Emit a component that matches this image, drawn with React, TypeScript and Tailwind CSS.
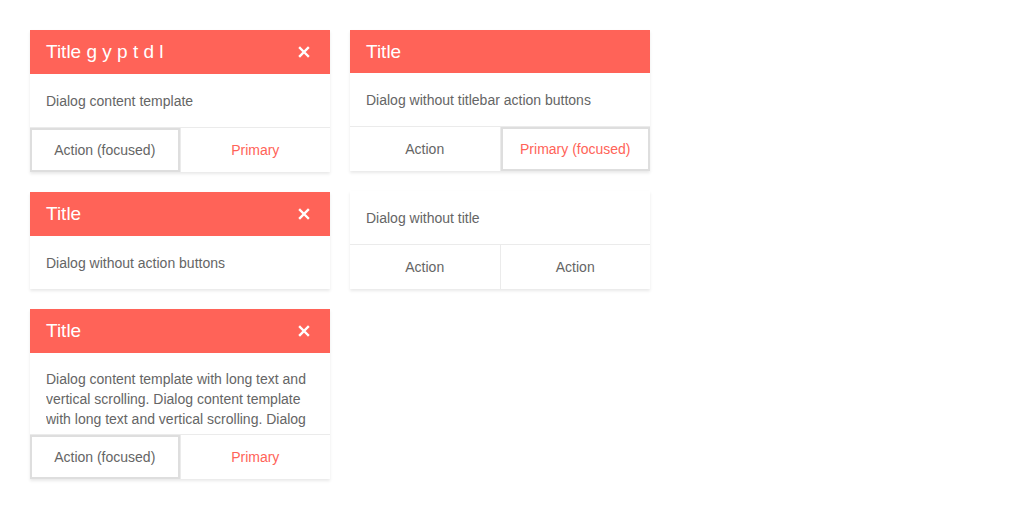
import React from "react";

const CloseIcon = () => (
  <svg width="12" height="12" viewBox="0 0 12 12" className="block">
    <path d="M2 2 L10 10 M10 2 L2 10" stroke="white" strokeWidth="2.4" strokeLinecap="square" />
  </svg>
);

type Btn = { label: string; primary?: boolean; focused?: boolean };

const Dialog = ({
  title,
  close = true,
  children,
  actions,
  contentClass = "pt-[17px] pb-4",
}: {
  title?: string;
  close?: boolean;
  children: React.ReactNode;
  actions?: Btn[];
  contentClass?: string;
}) => {
  return (
    <div className="w-[300px] bg-white flex flex-col shadow-[0_2px_3px_rgba(0,0,0,0.09)]">
      {title && (
        <div
          className={`flex items-center justify-between bg-[#ff6358] text-white px-4 ${
            close ? "h-[44px]" : "h-[43px]"
          }`}
        >
          <span className="text-[19px] leading-5">{title}</span>
          {close && (
            <span className="w-[16px] h-[16px] flex items-center justify-center mr-[2px]">
              <CloseIcon />
            </span>
          )}
        </div>
      )}
      <div className={`px-4 text-[14px] leading-5 text-[#656565] ${contentClass}`}>
        {children}
      </div>
      {actions && (
        <div className="flex border-t border-[#ebebeb]">
          {actions.map((a, i) => (
            <div
              key={i}
              className={`flex-1 h-[44px] flex items-center justify-center text-[14px] ${
                a.primary ? "text-[#ff6358]" : "text-[#656565]"
              } ${i > 0 ? "border-l border-[#ebebeb]" : ""} ${
                a.focused ? "shadow-[inset_0_0_0_2px_#dedede]" : ""
              }`}
            >
              {a.label}
            </div>
          ))}
        </div>
      )}
    </div>
  );
};

export default function App() {
  return (
    <div
      className="w-[1024px] h-[509px] bg-white flex gap-5 p-[30px]"
      style={{ fontFamily: "'Liberation Sans', Arial, sans-serif" }}
    >
      <div className="flex flex-col gap-5">
        <Dialog
          title="Title g y p t d l"
          actions={[{ label: "Action (focused)", focused: true }, { label: "Primary", primary: true }]}
        >
          Dialog content template
        </Dialog>
        <Dialog title="Title">Dialog without action buttons</Dialog>
        <Dialog
          title="Title"
          contentClass="pt-4 pb-[5px]"
          actions={[{ label: "Action (focused)", focused: true }, { label: "Primary", primary: true }]}
        >
          <div className="h-[60px] overflow-y-auto [scrollbar-width:none]">
            Dialog content template with long text and vertical scrolling. Dialog content template
            with long text and vertical scrolling. Dialog content template with long text and
            vertical scrolling.
          </div>
        </Dialog>
      </div>
      <div className="flex flex-col gap-5">
        <Dialog
          title="Title"
          close={false}
          actions={[{ label: "Action" }, { label: "Primary (focused)", primary: true, focused: true }]}
        >
          Dialog without titlebar action buttons
        </Dialog>
        <Dialog actions={[{ label: "Action" }, { label: "Action" }]}>Dialog without title</Dialog>
      </div>
    </div>
  );
}
